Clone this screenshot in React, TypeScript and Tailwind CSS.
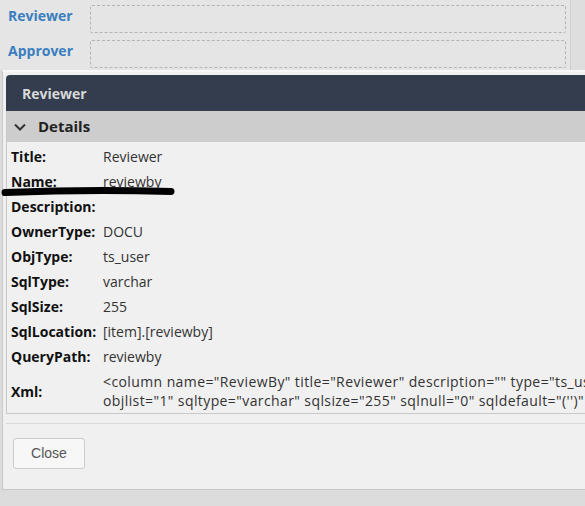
import React from 'react'

const rows: [string, string][] = [
  ['Title:', 'Reviewer'],
  ['Name:', 'reviewby'],
  ['Description:', ''],
  ['OwnerType:', 'DOCU'],
  ['ObjType:', 'ts_user'],
  ['SqlType:', 'varchar'],
  ['SqlSize:', '255'],
  ['SqlLocation:', '[item].[reviewby]'],
  ['QueryPath:', 'reviewby'],
]

const xmlLines = [
  '<column name="ReviewBy" title="Reviewer" description="" type="ts_user" ownertype="DOCU" objtype="ts_user"',
  'objlist="1" sqltype="varchar" sqlsize="255" sqlnull="0" sqldefault="(\'\')" />',
]

function FieldBox({ label }: { label: string }) {
  return (
    <div className="flex h-[28px]">
      <div className="w-[90px] shrink-0 pl-[8px] mt-[1px] leading-[20px] text-[14px] font-bold text-[#3a7ebf]">
        {label}
      </div>
      <div className="w-[476px] h-[28px] border border-dashed border-[#b4b4b4] rounded-[2px]" />
    </div>
  )
}

export default function App() {
  return (
    <div className="relative w-[585px] h-[506px] overflow-hidden bg-[#dcdcdc] font-['Open_Sans',sans-serif]">
      {/* page behind the dialog */}
      <div className="flex h-[70px] bg-[#e5e5e5]">
        <div className="w-[571px] border-r border-[#cfcfcf] pt-[5px] flex flex-col gap-[7px]">
          <FieldBox label="Reviewer" />
          <FieldBox label="Approver" />
        </div>
        <div className="flex-1 bg-[#dedede]" />
      </div>

      {/* dialog */}
      <div className="ml-[2px] w-[720px] h-[420px] bg-[#f0f0f0] border border-[#c8c8c8] border-t-[#f7f7f7] border-t-2 pt-[3px] pl-[3px] flex flex-col">
        <div className="h-[36px] bg-[#333d4e] rounded-tl-[4px] flex items-center pl-[16px] text-[14px] font-bold text-[#d9d9d9]">
          Reviewer
        </div>
        <div className="border-l border-b border-[#c8c8c8]">
          <div className="h-[31px] bg-[#cdcdcd] flex items-center pl-[7px] gap-[12px] text-[15px] font-bold text-[#222]">
            <svg width="12" height="8" viewBox="0 0 12 8" className="mt-[1px]">
              <polyline points="1,1.5 6,6.5 11,1.5" fill="none" stroke="#333" strokeWidth="2" />
            </svg>
            Details
          </div>
          <div className="pt-[2px] pl-[4px] text-[14px]">
            {rows.map(([k, v]) => (
              <div key={k} className="flex h-[25px] items-center">
                <div className="w-[92px] shrink-0 font-bold text-[#111]">{k}</div>
                <div className="text-[#333]">{v}</div>
              </div>
            ))}
            <div className="flex items-center py-[3px]">
              <div className="w-[92px] shrink-0 font-bold text-[#111]">Xml:</div>
              <div className="text-[#333] leading-[19px] whitespace-nowrap tracking-[0.4px]">
                {xmlLines.map((l) => (
                  <div key={l}>{l}</div>
                ))}
              </div>
            </div>
          </div>
        </div>
        <div className="mt-[9px] border-t border-[#dadada] pt-[14px] pl-[7px]">
          <button className="w-[72px] h-[31px] border border-[#cccccc] rounded-[3px] bg-[#f7f7f7] text-[14px] text-[#555] font-['Liberation_Sans',sans-serif]">
            Close
          </button>
        </div>
      </div>

      {/* marker scribble over the Name row */}
      <svg className="absolute left-0 top-0 pointer-events-none" width="585" height="506">
        <path d="M5 192.5 Q90 189 171 191.5" fill="none" stroke="#000" strokeWidth="7" strokeLinecap="round" />
      </svg>
    </div>
  )
}
